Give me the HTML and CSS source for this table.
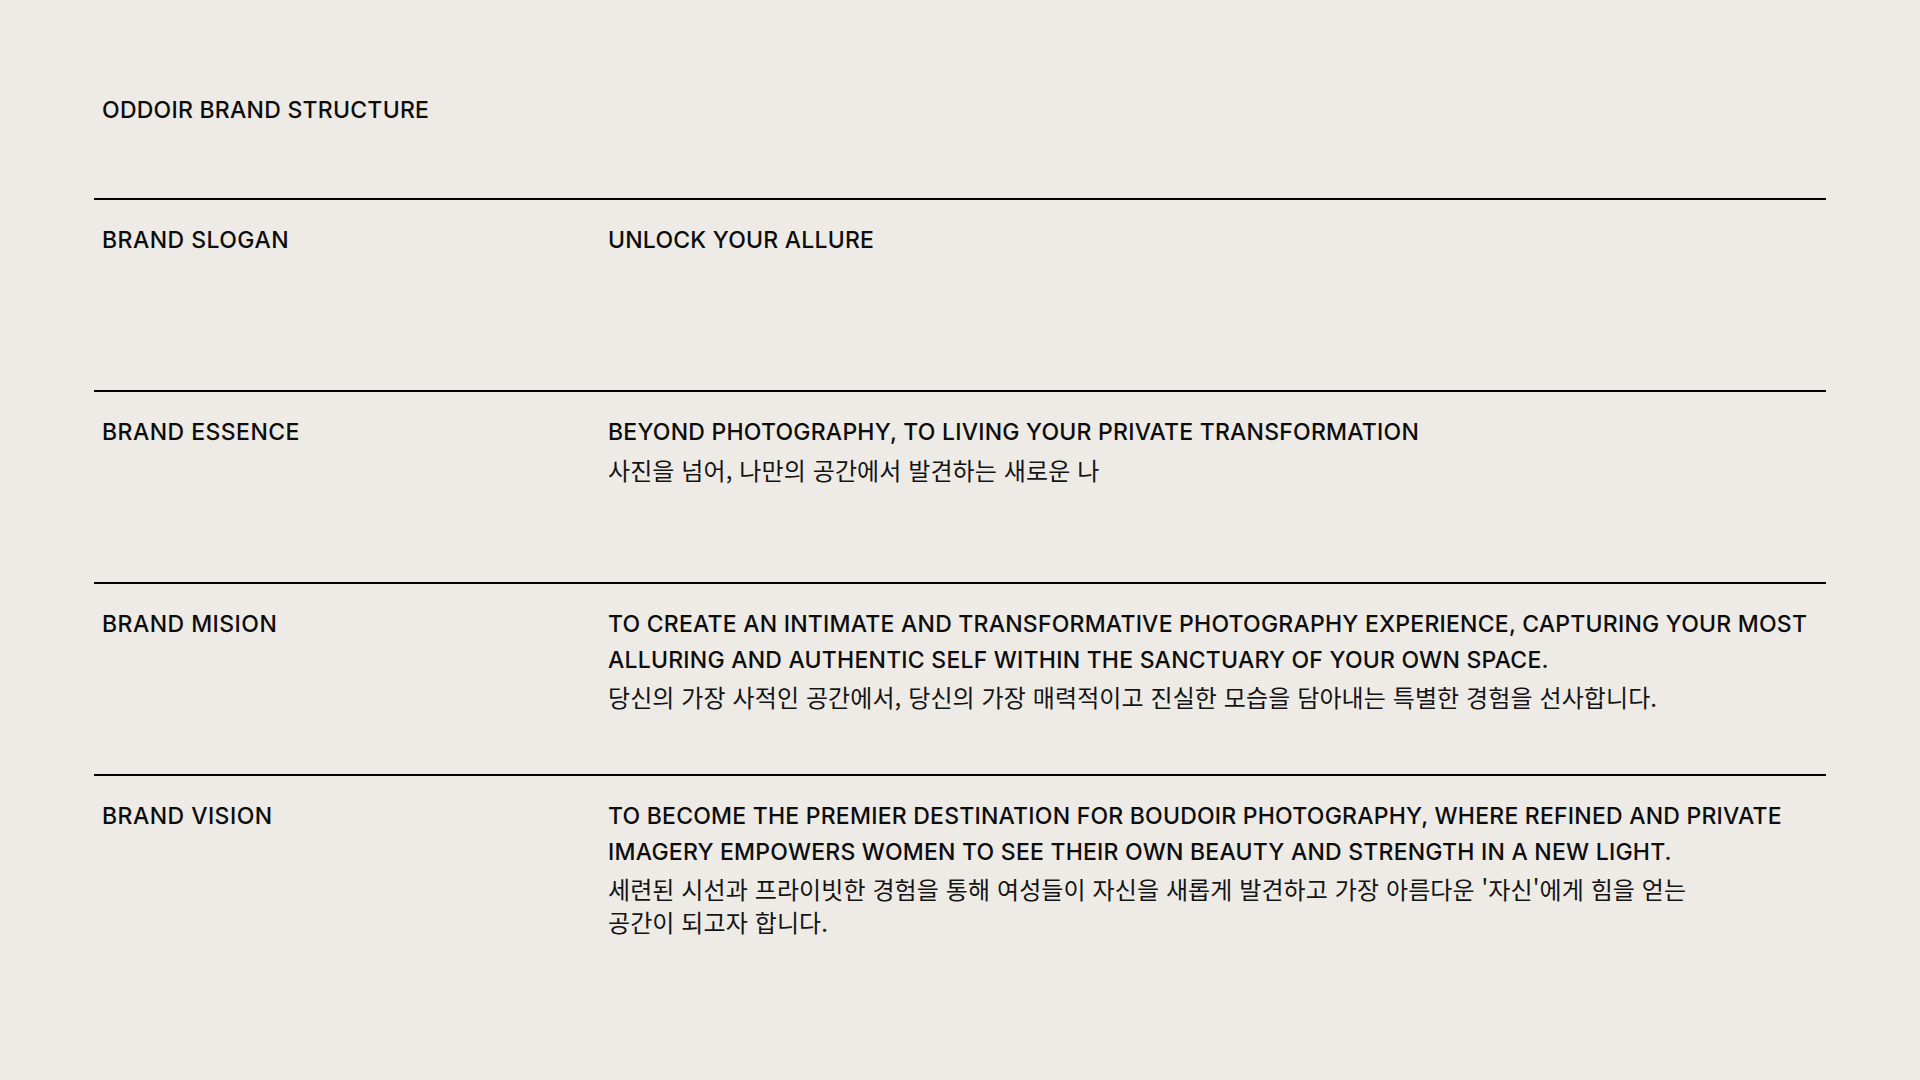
FILE: index.html
```html
<!DOCTYPE html>
<html lang="ko">
<head>
<meta charset="utf-8">
<title>ODDOIR Brand Structure</title>
<link rel="stylesheet" href="styles.css">
</head>
<body>
<main class="page">
  <h1 class="title">ODDOIR BRAND STRUCTURE</h1>
  <section class="table">
    <div class="row">
      <div class="label">BRAND SLOGAN</div>
      <div class="content">
        <p class="en">UNLOCK YOUR ALLURE</p>
      </div>
    </div>
    <div class="row">
      <div class="label">BRAND ESSENCE</div>
      <div class="content">
        <p class="en">BEYOND PHOTOGRAPHY, TO LIVING YOUR PRIVATE TRANSFORMATION</p>
        <p class="ko">사진을 넘어, 나만의 공간에서 발견하는 새로운 나</p>
      </div>
    </div>
    <div class="row">
      <div class="label">BRAND MISION</div>
      <div class="content">
        <p class="en">TO CREATE AN INTIMATE AND TRANSFORMATIVE PHOTOGRAPHY EXPERIENCE, CAPTURING YOUR MOST<br>ALLURING AND AUTHENTIC SELF WITHIN THE SANCTUARY OF YOUR OWN SPACE.</p>
        <p class="ko">당신의 가장 사적인 공간에서, 당신의 가장 매력적이고 진실한 모습을 담아내는 특별한 경험을 선사합니다.</p>
      </div>
    </div>
    <div class="row">
      <div class="label">BRAND VISION</div>
      <div class="content">
        <p class="en">TO BECOME THE PREMIER DESTINATION FOR BOUDOIR PHOTOGRAPHY, WHERE REFINED AND PRIVATE<br>IMAGERY EMPOWERS WOMEN TO SEE THEIR OWN BEAUTY AND STRENGTH IN A NEW LIGHT.</p>
        <p class="ko">세련된 시선과 프라이빗한 경험을 통해 여성들이 자신을 새롭게 발견하고 가장 아름다운 '자신'에게 힘을 얻는<br>공간이 되고자 합니다.</p>
      </div>
    </div>
  </section>
</main>
</body>
</html>
```

FILE: styles.css
```css
html, body {
  margin: 0;
  padding: 0;
}

body {
  background: #eeebe6;
  color: #0d0d0d;
  font-family: Inter, "Noto Sans", "Noto Sans CJK KR", sans-serif;
  width: 1920px;
  height: 1080px;
  overflow: hidden;
}

.page {
  padding: 92px 94px 0 94px;
}

.title {
  margin: 0 0 70px 0;
  padding-left: 8px;
  font-size: 23px;
  font-weight: 500;
  line-height: 36px;
  letter-spacing: 0.25px;
}

.table {
  display: flex;
  flex-direction: column;
}

.row {
  display: grid;
  grid-template-columns: 514px 1fr;
  box-sizing: border-box;
  height: 192px;
  border-top: 2px solid #000000;
  padding-top: 22px;
}

.label {
  padding-left: 8px;
  font-size: 23px;
  font-weight: 500;
  line-height: 36px;
  letter-spacing: 0.45px;
}

.content {
  padding-top: 1px;
  padding-right: 8px;
}

.en {
  margin: 0;
  font-size: 23px;
  font-weight: 500;
  line-height: 35.5px;
  letter-spacing: 0.22px;
}

.ko {
  margin: 2px 0 0 0;
  font-family: "Noto Sans CJK KR", sans-serif;
  font-size: 24px;
  font-weight: 400;
  line-height: 33px;
  letter-spacing: 0.1px;
  color: #141414;
}
```
